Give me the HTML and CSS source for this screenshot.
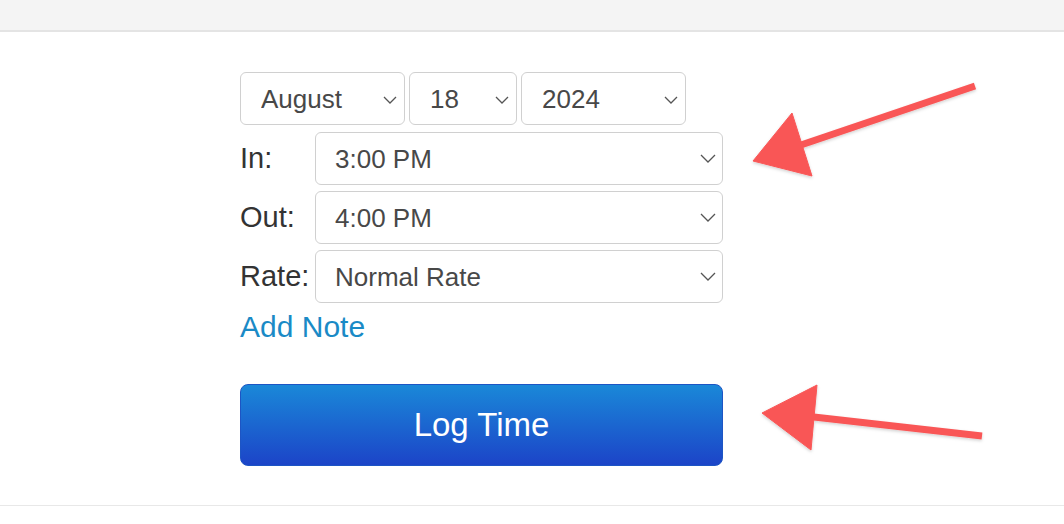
FILE: index.html
```html
<!doctype html>
<html lang="en">
 <head>
  <meta charset="UTF-8">
  <meta name="viewport" content="width=device-width, initial-scale=1.0">
  <title>Log Time</title>
  <link rel="stylesheet" href="styles.css">
 </head>
 <body>
  <div class="topbar"></div>
  <div class="page">
   <form class="log-form">
    <div class="date-row">
     <span class="sel sel-month">
      <select><option>August</option></select>
      <svg class="chev" width="14" height="8" viewBox="0 0 14 8"><path d="M1 1 L7 7 L13 1"/></svg>
     </span>
     <span class="sel sel-day">
      <select><option>18</option></select>
      <svg class="chev" width="14" height="8" viewBox="0 0 14 8"><path d="M1 1 L7 7 L13 1"/></svg>
     </span>
     <span class="sel sel-year">
      <select><option>2024</option></select>
      <svg class="chev" width="14" height="8" viewBox="0 0 14 8"><path d="M1 1 L7 7 L13 1"/></svg>
     </span>
    </div>
    <div class="field-row">
     <label class="field-label">In:</label>
     <span class="sel sel-wide">
      <select><option>3:00 PM</option></select>
      <svg class="chev" width="16" height="9" viewBox="0 0 16 9"><path d="M1 1 L8 8 L15 1"/></svg>
     </span>
    </div>
    <div class="field-row">
     <label class="field-label">Out:</label>
     <span class="sel sel-wide">
      <select><option>4:00 PM</option></select>
      <svg class="chev" width="16" height="9" viewBox="0 0 16 9"><path d="M1 1 L8 8 L15 1"/></svg>
     </span>
    </div>
    <div class="field-row">
     <label class="field-label">Rate:</label>
     <span class="sel sel-wide">
      <select><option>Normal Rate</option></select>
      <svg class="chev" width="16" height="9" viewBox="0 0 16 9"><path d="M1 1 L8 8 L15 1"/></svg>
     </span>
    </div>
    <a class="add-note" href="#">Add Note</a>
    <button type="button" class="log-btn">Log Time</button>
   </form>
  </div>
  <div class="footer-line"></div>

  <!-- annotation arrows drawn over the screenshot -->
  <svg class="arrows" width="1064" height="524" viewBox="0 0 1064 524">
   <defs>
    <filter id="soft" x="-10%" y="-10%" width="120%" height="130%">
     <feDropShadow dx="0" dy="1.5" stdDeviation="1.5" flood-color="#000" flood-opacity="0.18"/>
    </filter>
   </defs>
   <g filter="url(#soft)" fill="#f95757" stroke="#f95757">
    <line x1="975" y1="86" x2="795" y2="147" stroke-width="7"/>
    <polygon points="753,161 792,113 812,176" stroke-width="1" stroke-linejoin="round"/>
    <line x1="982" y1="436" x2="805" y2="416" stroke-width="7"/>
    <polygon points="762,413 817,385 811,450" stroke-width="1" stroke-linejoin="round"/>
   </g>
  </svg>
 </body>
</html>
```

FILE: styles.css
```css
* {
  margin: 0;
  padding: 0;
  box-sizing: border-box;
}

body {
  font-family: 'Liberation Sans', Arial, Helvetica, sans-serif;
  background: #fff;
  color: #333;
  position: relative;
  width: 1064px;
  height: 524px;
  overflow: hidden;
}

.topbar {
  height: 32px;
  background: #f4f4f4;
  border-bottom: 2px solid #e4e4e4;
}

.page {
  padding: 40px 0 0 240px;
}

.log-form {
  width: 483px;
  display: flex;
  flex-direction: column;
}

.date-row {
  display: flex;
  gap: 4px;
}

.sel {
  position: relative;
  display: block;
}

.sel select {
  -webkit-appearance: none;
  appearance: none;
  width: 100%;
  height: 53px;
  border: 1.5px solid #d0d0d0;
  border-radius: 6px;
  background: #fff;
  padding: 0 0 0 19px;
  font-family: 'Liberation Sans', Arial, sans-serif;
  font-size: 26px;
  color: #484848;
  outline: none;
}

.sel .chev {
  position: absolute;
  right: 8px;
  top: 24px;
  fill: none;
  stroke: #555;
  stroke-width: 1.3;
  pointer-events: none;
}

.sel-month { width: 165px; }
.sel-day { width: 108px; }
.sel-year { width: 165px; }
.sel-month select, .sel-year select, .sel-day select { padding-left: 20px; }

.sel-wide {
  width: 408px;
}

.sel-wide .chev {
  right: 7px;
  top: 22px;
}

.field-row {
  display: flex;
  align-items: center;
  margin-top: 6px;
}

.date-row + .field-row {
  margin-top: 7px;
}

.field-label {
  width: 75px;
  font-size: 29px;
  color: #333;
}

.add-note {
  font-size: 30px;
  color: #1a8ac6;
  text-decoration: none;
  margin-top: 7px;
  align-self: flex-start;
}

.log-btn {
  margin-top: 40px;
  height: 82px;
  width: 483px;
  border: 1px solid #1d55c4;
  border-radius: 8px;
  background: linear-gradient(#1a88d8, #1c44c8);
  color: #fff;
  font-family: 'Liberation Sans', Arial, sans-serif;
  font-size: 33px;
  cursor: pointer;
}

.footer-line {
  margin-top: 39px;
  border-top: 1px solid #e8e8e8;
}

.arrows {
  position: absolute;
  left: 0;
  top: 0;
  pointer-events: none;
}
```
